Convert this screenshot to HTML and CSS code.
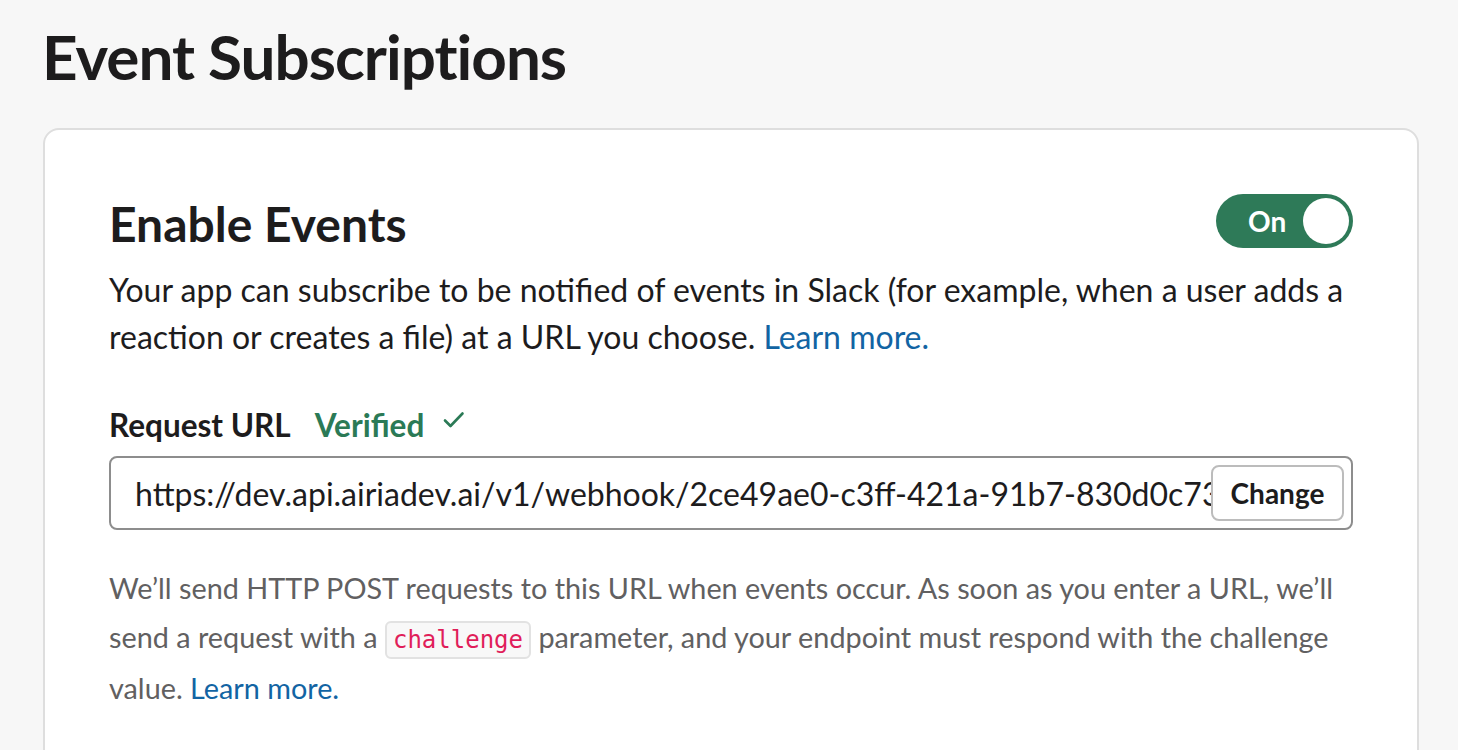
FILE: index.html
```html
<!DOCTYPE html>
<html lang="en">
<head>
<meta charset="utf-8">
<title>Event Subscriptions</title>
<link rel="stylesheet" href="styles.css">
</head>
<body>
<div class="page">
  <h1 class="page-title">Event Subscriptions</h1>
  <section class="card">
    <div class="card-head">
      <h2 class="card-title">Enable Events</h2>
      <button class="toggle" type="button"><span class="toggle-label">On</span><span class="toggle-knob"></span></button>
    </div>
    <p class="lead">Your app can subscribe to be notified of events in Slack (for example, when a user adds a reaction or creates a file) at a URL you choose. <a href="#" class="link">Learn more.</a></p>
    <div class="field-label">
      <span class="label-text">Request URL</span>
      <span class="verified">Verified</span>
      <svg class="check" width="22" height="18" viewBox="0 0 22 18"><path d="M2 9.5 L7.5 15 L19.5 2.5" fill="none" stroke="#2b7a56" stroke-width="2.6" stroke-linecap="round" stroke-linejoin="round"/></svg>
    </div>
    <div class="url-box">
      <span class="url-text">https://dev.api.airiadev.ai/v1/webhook/2ce49ae0-c3ff-421a-91b7-830d0c73a1f4</span>
      <button class="change-btn" type="button">Change</button>
    </div>
    <p class="help">We’ll send HTTP POST requests to this URL when events occur. As soon as you enter a URL, we’ll send a request with a <code class="code">challenge</code> parameter, and your endpoint must respond with the challenge value. <a href="#" class="link">Learn more.</a></p>
  </section>
</div>
</body>
</html>
```

FILE: styles.css
```css
html, body {
  margin: 0;
  padding: 0;
  background: #f7f7f7;
  height: 100%;
  overflow: hidden;
}
body {
  font-family: Lato, "Noto Sans", sans-serif;
  color: #1d1c1d;
}
.page {
  padding: 12px 40px 0 43px;
}
.page-title {
  margin: 0 0 0 -1px;
  font-size: 62px;
  font-weight: 700;
  line-height: 88px;
  letter-spacing: -1px;
  color: #1d1c1d;
}
.card {
  margin-top: 28px;
  background: #fff;
  border: 2px solid #dedede;
  border-radius: 16px;
  padding: 62px 64px 64px;
  width: 1376px;
  box-sizing: border-box;
  min-height: 700px;
}
.card-head {
  display: flex;
  align-items: center;
  justify-content: space-between;
}
.card-title {
  margin: 0;
  font-size: 48px;
  font-weight: 700;
  line-height: 64px;
}
.toggle {
  display: flex;
  align-items: center;
  justify-content: space-between;
  width: 137px;
  height: 54px;
  margin-bottom: 6px;
  border: none;
  border-radius: 27px;
  background: #2e7a58;
  padding: 0 4px 0 32px;
  box-sizing: border-box;
  cursor: pointer;
}
.toggle-label {
  font-family: Lato, sans-serif;
  font-weight: 700;
  font-size: 28px;
  color: #fff;
}
.toggle-knob {
  width: 46px;
  height: 46px;
  border-radius: 50%;
  background: #fff;
}
.lead {
  margin: 10px 0 0;
  font-size: 32px;
  line-height: 47px;
}
.link {
  color: #1264a3;
  text-decoration: none;
}
.field-label {
  margin-top: 45px;
  display: flex;
  align-items: center;
  font-size: 31.5px;
  font-weight: 700;
  line-height: 40px;
}
.verified {
  color: #2b7a56;
  margin-left: 24px;
}
.check {
  margin-left: 19px;
  margin-top: -10px;
}
.url-box {
  margin-top: 11px;
  height: 74px;
  border: 2px solid #8d8d8d;
  border-radius: 8px;
  box-sizing: border-box;
  display: flex;
  align-items: center;
  padding: 0 7px 0 24px;
  overflow: hidden;
}
.url-text {
  flex: 1;
  min-width: 0;
  white-space: nowrap;
  overflow: hidden;
  font-family: Lato, sans-serif;
  font-size: 32px;
  color: #1d1c1d;
}
.change-btn {
  flex: none;
  width: 133px;
  height: 56px;
  border: 2px solid #bcbcbc;
  border-radius: 8px;
  background: #fff;
  font-family: Lato, sans-serif;
  font-weight: 700;
  font-size: 28px;
  color: #1d1c1d;
}
.help {
  margin: 34px 0 0;
  font-size: 28.8px;
  line-height: 48.5px;
  color: #616061;
}
.code {
  font-family: "DejaVu Sans Mono", "Liberation Mono", monospace;
  font-size: 24px;
  color: #e01e5a;
  background: #f8f8f8;
  border: 2px solid #e2e2e2;
  border-radius: 6px;
  padding: 3px 6px;
}
```
